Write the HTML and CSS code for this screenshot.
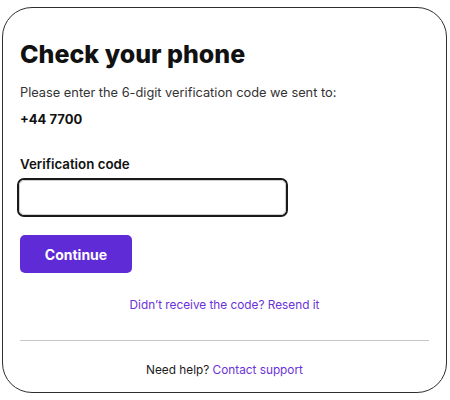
FILE: index.html
```html
<!DOCTYPE html>
<html>
<head>
<meta charset="utf-8">
<link rel="stylesheet" href="styles.css">
</head>
<body>
<div class="card">
  <h1 class="title">Check your phone</h1>
  <p class="lead">Please enter the 6-digit verification code we sent to:</p>
  <p class="phone">+44 7700</p>
  <label class="label" for="code">Verification code</label>
  <div class="input-ring"><input id="code" class="input" type="text"></div>
  <button class="btn">Continue</button>
  <div class="resend"><a href="#" class="link">Didn’t receive the code? Resend it</a></div>
  <hr class="divider">
  <div class="help">Need help? <a href="#" class="link">Contact support</a></div>
</div>
</body>
</html>
```
FILE: styles.css
```css
* { box-sizing: border-box; }
html, body { margin: 0; padding: 0; background: #fff; }
body { font-family: "Inter", "Noto Sans", sans-serif; color: #1a1a1a; }
.card {
  margin: 7px 0 0 2px;
  width: 445px;
  height: 386px;
  border: 1.5px solid #2e2e2e;
  border-radius: 30px;
  padding: 0 17px;
  display: flex;
  flex-direction: column;
}
.title { margin: 30px 0 0; font-size: 25px; font-weight: 800; line-height: 32px; color: #111; letter-spacing: 0; }
.lead { margin: 13px 0 0; font-size: 12.8px; line-height: 20px; color: #333; }
.phone { margin: 6px 0 0; font-size: 13px; line-height: 20px; font-weight: 700; color: #111; }
.label { margin-top: 25px; font-size: 13.3px; line-height: 20px; font-weight: 600; color: #111; }
.input-ring { margin: 4px 0 0 -3px; width: 271px; height: 39px; border: 2px solid #1a1a1a; border-radius: 7px; padding: 0; }
.input { display: block; width: 100%; height: 100%; border: 1.5px solid #cfcfcf; border-radius: 5px; outline: none; background: #fff; }
.btn { margin-top: 18px; width: 112px; height: 38px; background: #5f2bd6; color: #fff; border: none; border-radius: 5px; font-family: inherit; font-size: 14px; font-weight: 700; padding: 0; }
.resend { margin-top: 23px; text-align: center; font-size: 11.8px; line-height: 18px; }
.link { color: #6a31d9; text-decoration: none; }
.divider { margin: 26px 0 0; border: none; border-top: 1px solid #c6c6c6; height: 0; }
.help { margin-top: 20px; text-align: center; font-size: 11.8px; line-height: 18px; color: #1a1a1a; }
```
